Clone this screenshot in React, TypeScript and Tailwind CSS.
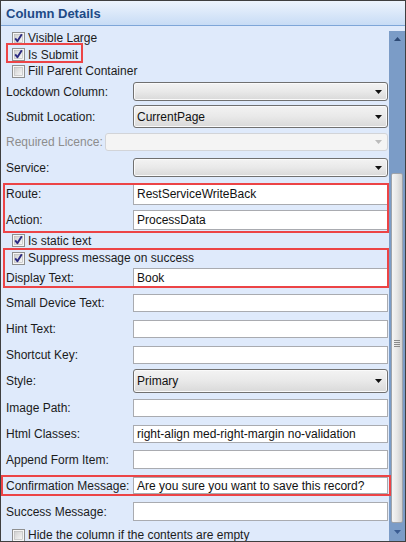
import type { ReactNode } from "react";

const FONT = "font-['Liberation_Sans',Arial,sans-serif]";

function Check({ checked }: { checked: boolean }) {
  return (
    <svg width="13" height="13" viewBox="0 0 13 13" className="shrink-0">
      <defs>
        <linearGradient id="cbfill" x1="0" y1="0" x2="1" y2="1">
          <stop offset="0" stopColor="#cfcfcf" />
          <stop offset="1" stopColor="#f8f8f8" />
        </linearGradient>
      </defs>
      <rect x="0.5" y="0.5" width="12" height="12" fill="#f6f6f6" stroke="#8e8f8f" />
      <rect x="2.5" y="2.5" width="8" height="8" fill="url(#cbfill)" stroke="#b4b4b4" strokeWidth="0.6" />
      {checked && (
        <path d="M3.2 6.4 L5.4 9.3 L9.8 2.2" fill="none" stroke="#2b2a82" strokeWidth="1.9" strokeLinejoin="round" />
      )}
    </svg>
  );
}

function CheckRow({ h, checked, label }: { h: string; checked: boolean; label: string }) {
  return (
    <div className={`flex shrink-0 items-center gap-[3px] pl-[11px] ${h}`}>
      <Check checked={checked} />
      <span className="text-[12px] text-[#1b1b1b] leading-none">{label}</span>
    </div>
  );
}

function Field({
  h,
  label,
  children,
  disabled,
  narrow,
}: {
  h: string;
  label: string;
  children: ReactNode;
  disabled?: boolean;
  narrow?: boolean;
}) {
  return (
    <div className={`flex shrink-0 items-center ${h}`}>
      <div
        className={`shrink-0 pl-[5px] text-[12px] leading-none whitespace-nowrap ${
          narrow ? "w-[104px]" : "w-[132px]"
        } ${disabled ? "text-[#8d8d8d]" : "text-[#1b1b1b]"}`}
      >
        {label}
      </div>
      {children}
    </div>
  );
}

function TextBox({ h, value = "" }: { h: string; value?: string }) {
  return (
    <div
      className={`flex w-[255px] items-center border border-[#a9abb0] bg-white pl-[3px] text-[12px] text-[#111] whitespace-nowrap ${h}`}
    >
      {value}
    </div>
  );
}

function Combo({ h, value = "", disabled, w = "w-[255px]" }: { h: string; value?: string; disabled?: boolean; w?: string }) {
  return (
    <div
      className={`flex items-center justify-between rounded-[3px] border pl-[3px] pr-[5px] text-[12px] ${w} ${h} ${
        disabled
          ? "border-[#d2d4d8] bg-[#f4f4f4] text-[#999]"
          : "border-[#707070] bg-gradient-to-b from-[#f3f3f3] via-[#e9e9e9] to-[#d9d9d9] text-[#111] shadow-[inset_0_0_0_1px_#fafafa]"
      }`}
    >
      <span>{value}</span>
      <svg width="7" height="4" viewBox="0 0 7 4">
        <path d="M0 0H7L3.5 4Z" fill={disabled ? "#bcbcbc" : "#111"} />
      </svg>
    </div>
  );
}

function ScrollBar() {
  return (
    <div className="mt-[5px] flex w-[16px] shrink-0 flex-col bg-[#7b9cc7]">
      <div className="flex h-[16px] shrink-0 items-center justify-center">
        <svg width="7" height="4" viewBox="0 0 7 4">
          <path d="M0 4H7L3.5 0Z" fill="#2d4a76" />
        </svg>
      </div>
      <div className="h-[126px] shrink-0" />
      <div className="mx-[2px] flex h-[350px] shrink-0 flex-col items-center justify-center rounded-[2px] border border-[#9ea3aa] bg-gradient-to-r from-[#f5f5f5] via-[#e6e6e6] to-[#cfcfcf]">
        <div className="-mt-[10px] flex flex-col gap-[1px]">
          <div className="h-[1px] w-[6px] bg-[#8a8a8a]" />
          <div className="h-[1px] w-[6px] bg-[#8a8a8a]" />
          <div className="h-[1px] w-[6px] bg-[#8a8a8a]" />
          <div className="h-[1px] w-[6px] bg-[#8a8a8a]" />
        </div>
      </div>
      <div className="flex flex-1 items-start justify-center pt-[7px]">
        <svg width="7" height="4" viewBox="0 0 7 4">
          <path d="M0 0H7L3.5 4Z" fill="#3a5c92" />
        </svg>
      </div>
    </div>
  );
}

export default function App() {
  return (
    <div
      className={`relative flex h-[542px] w-[406px] flex-col overflow-hidden border border-[#3f3f3f] bg-[#dfeafb] ${FONT}`}
    >
      <div className="flex h-[25px] shrink-0 items-center border-b border-[#7ea6d8] bg-gradient-to-b from-[#edf4fd] to-[#c8dcf5] pl-[5px] pt-[1px]">
        <span className="text-[13px] font-bold text-[#1e4a86]">Column Details</span>
      </div>

      <div className="flex min-h-0 flex-1">
        <div className="flex w-[388px] shrink-0 flex-col pt-[4px]">
          <CheckRow h="h-[16.5px]" checked label="Visible Large" />
          <CheckRow h="h-[16.5px]" checked label="Is Submit" />
          <CheckRow h="h-[16.5px]" checked={false} label="Fill Parent Container" />

          <Field h="h-[24px]" label="Lockdown Column:">
            <Combo h="h-[19px]" />
          </Field>
          <Field h="h-[26px]" label="Submit Location:">
            <Combo h="h-[23px]" value="CurrentPage" />
          </Field>
          <Field h="h-[25px]" label="Required Licence:" disabled narrow>
            <Combo h="h-[18px]" disabled w="w-[283px]" />
          </Field>
          <Field h="h-[26px]" label="Service:">
            <Combo h="h-[19px]" />
          </Field>
          <Field h="h-[27px]" label="Route:">
            <TextBox h="h-[21px]" value="RestServiceWriteBack" />
          </Field>
          <Field h="h-[24px]" label="Action:">
            <TextBox h="h-[20px]" value="ProcessData" />
          </Field>

          <CheckRow h="h-[18px]" checked label="Is static text" />
          <CheckRow h="h-[17px]" checked label="Suppress message on success" />

          <Field h="h-[23px]" label="Display Text:">
            <TextBox h="h-[20px]" value="Book" />
          </Field>
          <Field h="h-[26px]" label="Small Device Text:">
            <TextBox h="h-[18px]" />
          </Field>
          <Field h="h-[26px]" label="Hint Text:">
            <TextBox h="h-[18px]" />
          </Field>
          <Field h="h-[26px]" label="Shortcut Key:">
            <TextBox h="h-[18px]" />
          </Field>
          <Field h="h-[27px]" label="Style:">
            <Combo h="h-[24px]" value="Primary" />
          </Field>
          <Field h="h-[26px]" label="Image Path:">
            <TextBox h="h-[18px]" />
          </Field>
          <Field h="h-[26px]" label="Html Classes:">
            <TextBox h="h-[18px]" value="right-align med-right-margin no-validation" />
          </Field>
          <Field h="h-[26px]" label="Append Form Item:">
            <TextBox h="h-[19px]" />
          </Field>
          <Field h="h-[26px]" label="Confirmation Message:">
            <TextBox h="h-[17px]" value="Are you sure you want to save this record?" />
          </Field>
          <Field h="h-[26px]" label="Success Message:">
            <TextBox h="h-[19px]" />
          </Field>
          <CheckRow h="h-[21px]" checked={false} label="Hide the column if the contents are empty" />
        </div>

        <ScrollBar />
      </div>

      {/* annotation boxes */}
      <div className="pointer-events-none absolute left-[5px] top-[42px] h-[20px] w-[77px] border-2 border-[#ec4446]" />
      <div className="pointer-events-none absolute left-[2px] top-[182px] h-[50px] w-[386px] border-2 border-[#ec4446]" />
      <div className="pointer-events-none absolute left-[2px] top-[247px] h-[40px] w-[386px] border-2 border-[#ec4446]" />
      <div className="pointer-events-none absolute left-[0px] top-[474px] h-[21px] w-[390px] border-2 border-[#ec4446]" />
    </div>
  );
}
